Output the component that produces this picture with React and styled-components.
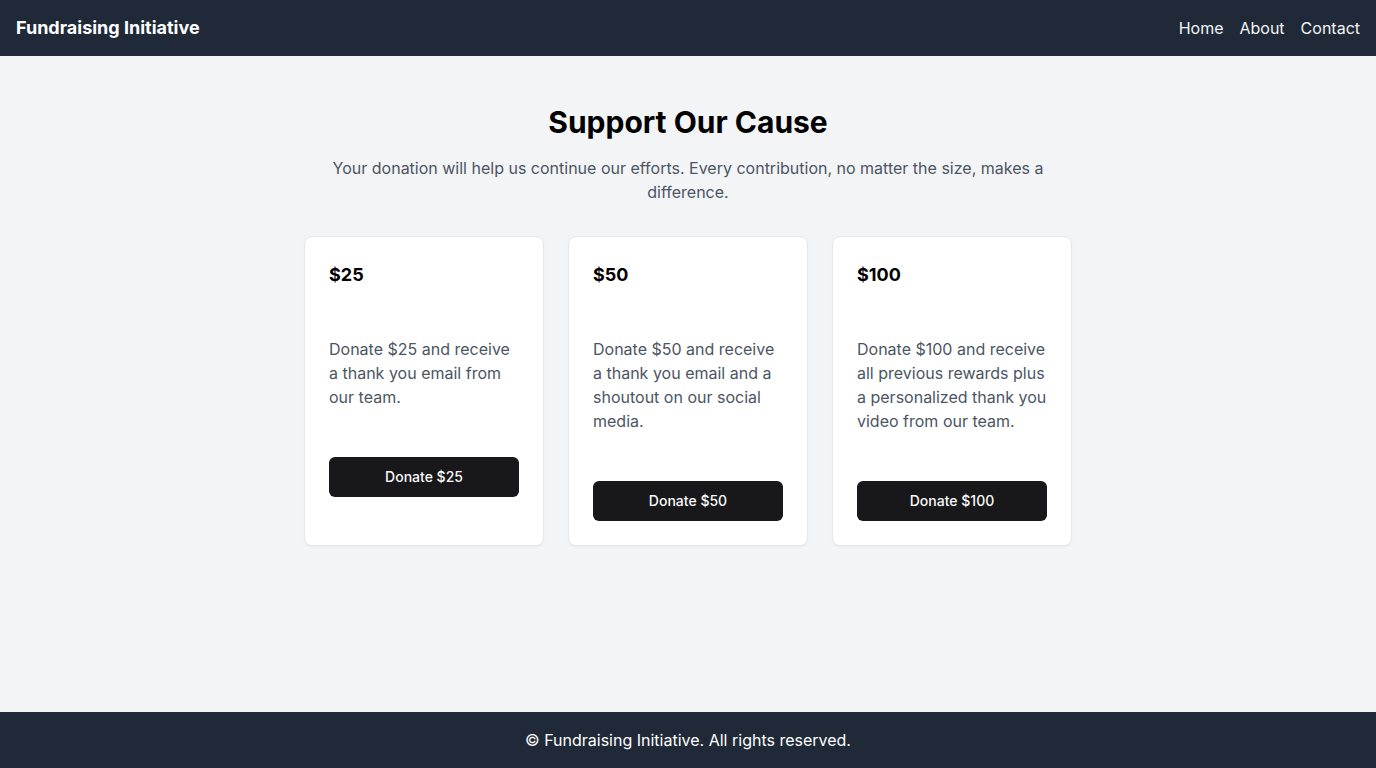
import React from "react";
import styled, { createGlobalStyle } from "styled-components";

const GlobalStyle = createGlobalStyle`
  * { box-sizing: border-box; }
  html, body { margin: 0; padding: 0; }
  body {
    font-family: Inter, "Noto Sans", sans-serif;
    background: #f3f4f6;
    color: #111827;
  }
`;

// Layout
const Page = styled.div`
  min-height: 100vh;
  display: flex;
  flex-direction: column;
`;

const Header = styled.header`
  height: 56px;
  background: #1f2937;
  color: #fff;
  display: flex;
  align-items: center;
  justify-content: space-between;
  padding: 0 16px;
`;

const Brand = styled.h1`
  margin: 0;
  font-size: 18px;
  font-weight: 700;
  line-height: 28px;
`;

const Nav = styled.nav`
  display: flex;
  gap: 16px;
`;

const NavLink = styled.a`
  color: #f3f4f6;
  text-decoration: none;
  font-size: 16px;
  line-height: 24px;
`;

const Main = styled.main`
  flex: 1;
  padding: 48px 16px;
  display: flex;
  flex-direction: column;
  align-items: center;
`;

const Title = styled.h2`
  margin: 0;
  font-size: 30px;
  line-height: 36px;
  font-weight: 700;
  color: #000;
  text-align: center;
`;

const Intro = styled.p`
  margin: 16px 0 32px;
  max-width: 768px;
  font-size: 16px;
  line-height: 24px;
  color: #4b5563;
  text-align: center;
`;

const Grid = styled.div`
  width: 768px;
  display: grid;
  grid-template-columns: repeat(3, 1fr);
  gap: 24px;
`;

// Card
const Card = styled.div`
  background: #fff;
  border: 1px solid #e5e7eb;
  border-radius: 8px;
  box-shadow: 0 1px 2px rgba(0, 0, 0, 0.05);
`;

const CardHeader = styled.div`
  padding: 24px;
`;

const Amount = styled.h3`
  margin: 0;
  font-size: 18px;
  line-height: 28px;
  font-weight: 700;
  color: #000;
`;

const CardBody = styled.div`
  padding: 24px;
`;

const Description = styled.p`
  margin: 0;
  font-size: 16px;
  line-height: 24px;
  color: #4b5563;
`;

const CardFooter = styled.div`
  padding: 24px;
`;

const DonateButton = styled.button`
  width: 100%;
  height: 40px;
  padding: 0 16px 1px;
  display: flex;
  align-items: center;
  justify-content: center;
  border: none;
  border-radius: 6px;
  background: #18181b;
  color: #fafafa;
  font-family: inherit;
  font-size: 14px;
  line-height: 20px;
  font-weight: 500;
  cursor: pointer;
`;

const Footer = styled.footer`
  height: 56px;
  background: #1f2937;
  color: #fff;
  display: flex;
  align-items: center;
  justify-content: center;
  font-size: 16px;
`;

const tiers = [
  { amount: 25, text: "Donate $25 and receive a thank you email from our team." },
  {
    amount: 50,
    text: "Donate $50 and receive a thank you email and a shoutout on our social media.",
  },
  {
    amount: 100,
    text: "Donate $100 and receive all previous rewards plus a personalized thank you video from our team.",
  },
];

export default function App() {
  return (
    <Page>
      <GlobalStyle />
      <Header>
        <Brand>Fundraising Initiative</Brand>
        <Nav>
          <NavLink href="#">Home</NavLink>
          <NavLink href="#">About</NavLink>
          <NavLink href="#">Contact</NavLink>
        </Nav>
      </Header>
      <Main>
        <Title>Support Our Cause</Title>
        <Intro>
          Your donation will help us continue our efforts. Every contribution,
          no matter the size, makes a difference.
        </Intro>
        <Grid>
          {tiers.map((t) => (
            <Card key={t.amount}>
              <CardHeader>
                <Amount>${t.amount}</Amount>
              </CardHeader>
              <CardBody>
                <Description>{t.text}</Description>
              </CardBody>
              <CardFooter>
                <DonateButton>Donate ${t.amount}</DonateButton>
              </CardFooter>
            </Card>
          ))}
        </Grid>
      </Main>
      <Footer>© Fundraising Initiative. All rights reserved.</Footer>
    </Page>
  );
}
